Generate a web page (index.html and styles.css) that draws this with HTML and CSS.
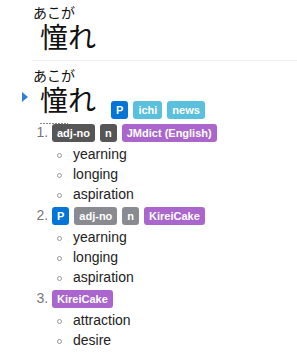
FILE: index.html
```html
<!DOCTYPE html>
<html lang="ja">
<head>
    <meta charset="UTF-8">
    <meta name="viewport" content="width=device-width, initial-scale=1.0">
    <title>憧れ</title>
    <link rel="stylesheet" href="styles.css">
</head>
<body>

    <div class="page">
        <div class="query">
            <span class="ruby"><span class="rt">あこが</span><span class="rb">憧</span></span><span class="kana">れ</span>
        </div>

        <div class="entry current">
            <div class="entry-head">
                <span class="expression">
                    <span class="ruby"><span class="rt">あこが</span><span class="rb kanji-link">憧</span></span><span class="kana">れ</span>
                </span>
                <div class="tags">
                    <span class="tag popular">P</span>
                    <span class="tag frequent">ichi</span>
                    <span class="tag frequent">news</span>
                </div>
            </div>

            <ol class="senses">
                <li>
                    <div class="tags">
                        <span class="tag pos">adj-no</span>
                        <span class="tag pos">n</span>
                        <span class="tag dict">JMdict (English)</span>
                    </div>
                    <ul class="glosses">
                        <li>yearning</li>
                        <li>longing</li>
                        <li>aspiration</li>
                    </ul>
                </li>
                <li>
                    <div class="tags">
                        <span class="tag popular">P</span>
                        <span class="tag pos light">adj-no</span>
                        <span class="tag pos light">n</span>
                        <span class="tag dict">KireiCake</span>
                    </div>
                    <ul class="glosses">
                        <li>yearning</li>
                        <li>longing</li>
                        <li>aspiration</li>
                    </ul>
                </li>
                <li>
                    <div class="tags">
                        <span class="tag dict">KireiCake</span>
                    </div>
                    <ul class="glosses">
                        <li>attraction</li>
                        <li>desire</li>
                    </ul>
                </li>
            </ol>
        </div>
    </div>

</body>
</html>
```

FILE: styles.css
```css
body {
    margin: 0;
    background: #fff;
    color: #222;
    font-family: "Liberation Sans", Arial, sans-serif;
    font-size: 14px;
}

.page {
    padding: 4px 0 0 32px;
}

/* headword with furigana */
.ruby {
    display: inline-block;
    text-align: center;
}

.rt {
    display: block;
    margin: 0 -7px;
    font-size: 14px;
    line-height: 16px;
    white-space: nowrap;
}

.rb,
.kana {
    font-size: 28px;
    line-height: 32px;
}

.query,
.expression {
    font-family: "Noto Sans CJK JP", sans-serif;
    color: #111;
}

.query {
    padding: 0 0 8px 8px;
    border-bottom: 1px solid #eee;
}

.entry {
    position: relative;
    padding-top: 6px;
}

.entry.current::before {
    content: "";
    position: absolute;
    left: -10px;
    top: 31px;
    border-left: 6px solid #2f7fd8;
    border-top: 5px solid transparent;
    border-bottom: 5px solid transparent;
}

.entry-head {
    display: flex;
    align-items: flex-end;
    padding-left: 8px;
}

.kanji-link {
    background: repeating-linear-gradient(90deg, #888 0 2px, transparent 2px 3px) left bottom / 100% 1px no-repeat;
    padding-bottom: 5px;
}

.entry-head .tags {
    margin: 0 0 -4px 15px;
}

/* tags */
.tags {
    display: flex;
    gap: 5px;
}

.tag {
    display: inline-block;
    padding: 0 5px;
    border-radius: 3px;
    color: #fff;
    font-size: 11px;
    font-weight: bold;
    line-height: 18px;
}

.tag.popular {
    background: #0275d8;
}

.tag.frequent {
    background: #5bc0de;
}

.tag.pos {
    background: #565656;
}

.tag.pos.light {
    background: #8a8a91;
}

.tag.dict {
    background: #aa66cc;
}

/* senses */
.senses {
    margin: 7px 0 0;
    padding-left: 20px;
}

.senses > li {
    line-height: 20px;
    margin-bottom: 1px;
}

.senses > li::marker {
    color: #777;
}

.senses .tags {
    padding: 2px 0;
}

.glosses {
    margin: 0;
    padding-left: 21px;
    list-style: none;
}

.glosses li::before {
    content: "";
    display: inline-block;
    width: 3px;
    height: 3px;
    margin: 0 11px 0 -16px;
    border: 1px solid #999;
    border-radius: 50%;
    vertical-align: middle;
}
```
